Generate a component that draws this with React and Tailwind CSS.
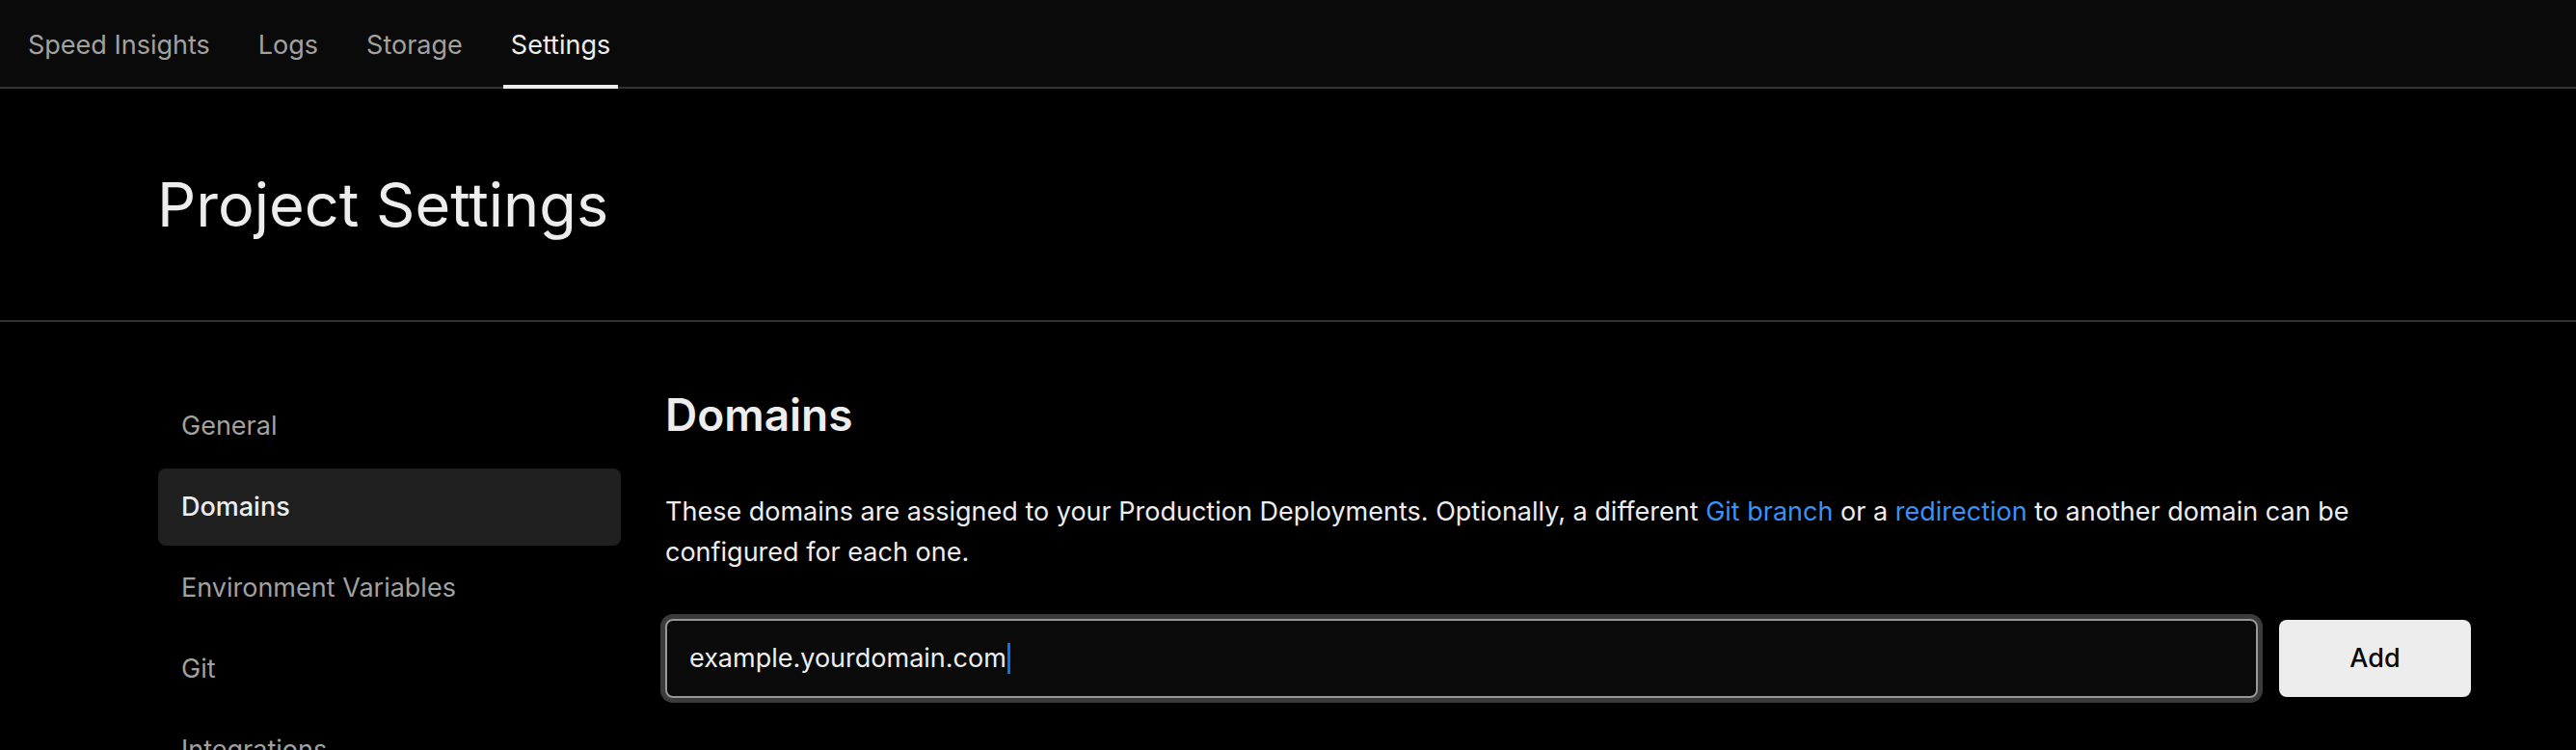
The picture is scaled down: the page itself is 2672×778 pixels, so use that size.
import React from "react";

const tabs = [
  { label: "Speed Insights" },
  { label: "Logs" },
  { label: "Storage" },
  { label: "Settings", active: true },
];

const sideItems = [
  { label: "General" },
  { label: "Domains", active: true },
  { label: "Environment Variables" },
  { label: "Git" },
  { label: "Integrations" },
];

export default function App() {
  return (
    <div className="h-[778px] w-full overflow-hidden bg-black font-['Inter',sans-serif] text-[#ededed] antialiased">
      {/* Top navigation */}
      <nav className="flex h-[92px] items-stretch border-b-2 border-[#333333] bg-[#0a0a0a] pl-[21px] pt-[3px]">
        <div className="flex items-stretch gap-[34px]">
          {tabs.map((t) => (
            <div
              key={t.label}
              className={
                "relative flex items-center px-[8px] text-[27px] leading-[42px] " +
                (t.active ? "text-[#ededed]" : "text-[#a1a1a1]")
              }
            >
              {t.label}
              {t.active && (
                <span className="absolute bottom-[-2px] left-0 right-0 h-[4px] bg-[#ededed]" />
              )}
            </div>
          ))}
        </div>
      </nav>

      {/* Header */}
      <header className="flex h-[242px] items-center border-b-2 border-[#333333] pl-[163px]">
        <h1 className="text-[63px] leading-[74px] text-[#ededed]">Project Settings</h1>
      </header>

      {/* Body */}
      <div className="flex pl-[164px] pr-[109px] pt-[68px]">
        <aside className="flex w-[480px] shrink-0 flex-col gap-[4px]">
          {sideItems.map((s) => (
            <div
              key={s.label}
              className={
                "flex h-[80px] items-center rounded-[8px] px-[24px] text-[27px] " +
                (s.active
                  ? "bg-[#202020] font-medium text-[#ededed]"
                  : "text-[#a1a1a1]")
              }
            >
              {s.label}
            </div>
          ))}
        </aside>

        <main className="ml-[46px] flex min-w-0 flex-1 flex-col">
          <h2 className="text-[46px] font-semibold leading-[56px] text-[#ededed]">Domains</h2>
          <p className="mt-[52px] text-[27px] leading-[42px] text-[#ededed]">
            These domains are assigned to your Production Deployments. Optionally, a different{" "}
            <span className="text-[#3a91f7]">Git branch</span> or a{" "}
            <span className="text-[#3a91f7]">redirection</span> to another domain can be
            <br />
            configured for each one.
          </p>
          <div className="mt-[48px] flex items-center">
            <div className="flex h-[82px] flex-1 items-center rounded-[8px] border-2 border-[#979797] bg-[#0a0a0a] pl-[23px] shadow-[0_0_0_5px_#3b3b3b]">
              <span className="text-[27px] leading-[42px] text-[#ededed]">
                example.yourdomain.com
              </span>
              <span className="ml-[1px] h-[32px] w-[3px] bg-[#0a72ef]" />
            </div>
            <button className="ml-[22px] flex h-[80px] w-[199px] items-center justify-center rounded-[8px] bg-[#ededed] text-[27px] font-medium text-[#0a0a0a]">
              Add
            </button>
          </div>
        </main>
      </div>
    </div>
  );
}
